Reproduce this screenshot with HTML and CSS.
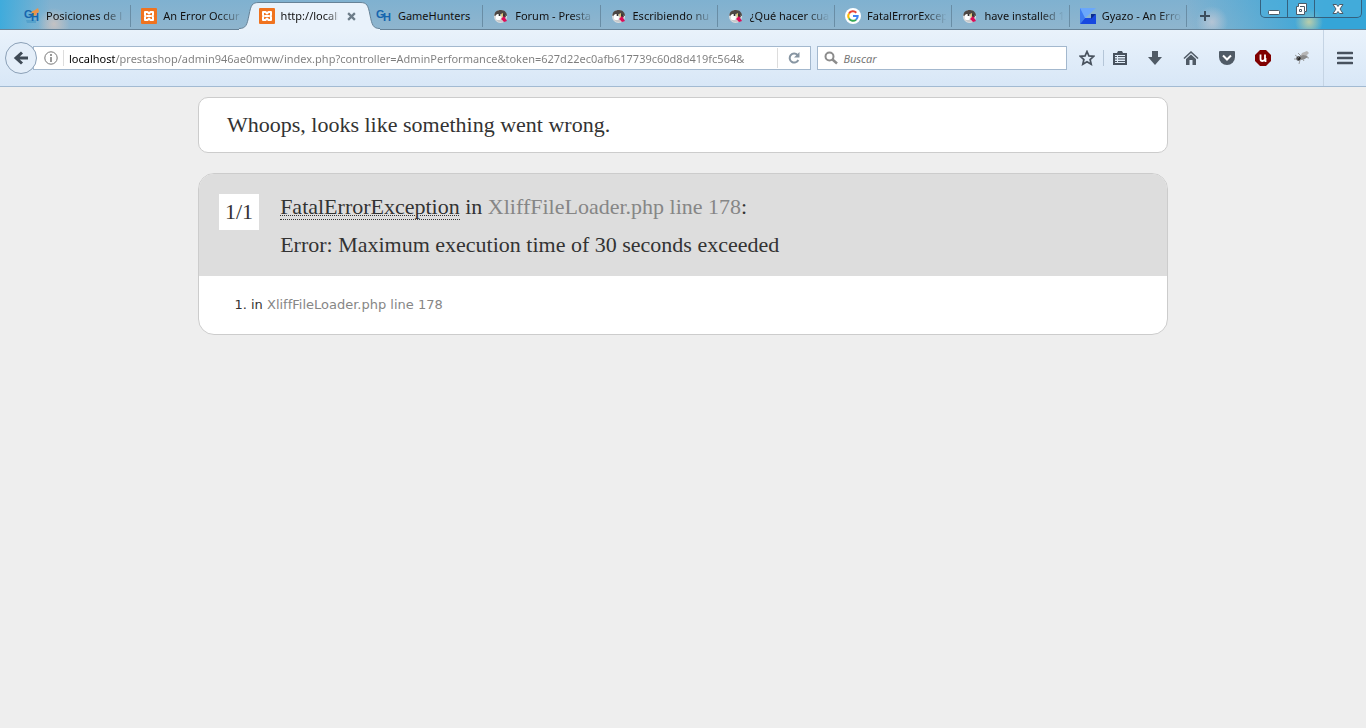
FILE: index.html
```html
<!DOCTYPE html>
<html lang="es">
<head>
    <meta charset="UTF-8">
    <title>Whoops, looks like something went wrong.</title>
    <link rel="stylesheet" href="styles.css">
</head>
<body>
    <!-- shared icons -->
    <svg class="defs" aria-hidden="true">
        <symbol id="xampp" viewBox="0 0 16 16">
            <rect width="16" height="16" rx="1" fill="#f0731f"/>
            <path d="M4 4h2.500L8 5.500 9.500 4H12v3l-1 1 1 1v3H9.500L8 10.500 6.500 12H4V9l1-1-1-1z" fill="#f0731f" stroke="#fff" stroke-width="2" stroke-linejoin="round"/>
            <path d="M6 8h4" stroke="#fff" stroke-width="2"/>
        </symbol>
        <symbol id="puffin" viewBox="0 0 16 16">
            <circle cx="7.500" cy="8.500" r="6.500" fill="#dededf"/>
            <path d="M1.500 8C1 4 4 2 8 2c4 0 6 3 6 6l-3-1-4-1-3 1z" fill="#4d4744"/>
            <path d="M3 7q2-2 4 0l1 3-2 3-3-2z" fill="#fff"/>
            <circle cx="6.500" cy="7" r="1" fill="#222"/>
            <path d="M8 6l2-1 1 4-2 1z" fill="#d8c57c"/>
            <path d="M10 5l3 3-1 2-2-1z" fill="#3b3634"/>
            <path d="M11 8l3 5-3 1-3-3z" fill="#dc0c58"/>
            <path d="M3 12q3 3 7 2l-1-2z" fill="#c8c9cb"/>
        </symbol>
        <symbol id="cap" viewBox="0 0 24 30">
            <path d="M0 30V28.500C7 28.500 8 25 10 15C12 5 13 2.500 20 2.500H24V30z" fill="#e9f2fb"/>
            <path d="M0 28.500C7 28.500 8 25 10 15C12 5 13 2.500 20 2.500H24" fill="none" stroke="#668297"/>
        </symbol>
    </svg>

    <header class="browser">
        <div class="tabstrip">
            <div class="tabs">
                <div class="tab">
                    <svg class="favicon" viewBox="0 0 16 16">
                        <path d="M7 4l4-2 3-2 1 3-2 4-4 1z" fill="#e8954b"/>
                        <path d="M2 12h10v3H3z" fill="#4c9bc8" opacity=".7"/>
                        <text x="0" y="10" class="gh-letter">G</text>
                        <text x="7" y="13" class="gh-letter">H</text>
                    </svg>
                    <span class="tab-title">Posiciones de l</span>
                </div>
                <div class="tab">
                    <svg class="favicon"><use href="#xampp"/></svg>
                    <span class="tab-title">An Error Occur</span>
                </div>
                <div class="tab active">
                    <svg class="tab-cap left"><use href="#cap"/></svg>
                    <span class="tab-middle"></span>
                    <svg class="tab-cap right"><use href="#cap"/></svg>
                    <svg class="favicon"><use href="#xampp"/></svg>
                    <span class="tab-title">http://locall</span>
                    <button class="tab-close" aria-label="Cerrar"><svg viewBox="0 0 8 8"><path d="M1 1l6 6M7 1L1 7" stroke="#6d7c89" stroke-width="2"/></svg></button>
                </div>
                <div class="tab">
                    <svg class="favicon" viewBox="0 0 16 16">
                        <text x="0" y="10" class="gh-letter">G</text>
                        <text x="7" y="13" class="gh-letter">H</text>
                    </svg>
                    <span class="tab-title whole">GameHunters</span>
                </div>
                <div class="tab">
                    <svg class="favicon"><use href="#puffin"/></svg>
                    <span class="tab-title">Forum - Presta</span>
                </div>
                <div class="tab">
                    <svg class="favicon"><use href="#puffin"/></svg>
                    <span class="tab-title">Escribiendo nu</span>
                </div>
                <div class="tab">
                    <svg class="favicon"><use href="#puffin"/></svg>
                    <span class="tab-title">¿Qué hacer cua</span>
                </div>
                <div class="tab">
                    <svg class="favicon" viewBox="0 0 16 16">
                        <circle cx="8" cy="8" r="8" fill="#fff"/>
                        <g fill="none" stroke-width="2">
                            <path d="M4 5.500A4.700 4.700 0 0 1 11.300 4.700" stroke="#ea4335"/>
                            <path d="M4 5.500a4.700 4.700 0 0 0 0 5" stroke="#fbbc05"/>
                            <path d="M4 10.500a4.700 4.700 0 0 0 7 1.200" stroke="#34a853"/>
                            <path d="M8 8h4.700a4.700 4.700 0 0 1-1.700 3.700" stroke="#4285f4"/>
                        </g>
                    </svg>
                    <span class="tab-title">FatalErrorExcep</span>
                </div>
                <div class="tab">
                    <svg class="favicon"><use href="#puffin"/></svg>
                    <span class="tab-title">have installed 1</span>
                </div>
                <div class="tab">
                    <svg class="favicon" viewBox="0 0 16 16">
                        <path d="M0 0h16L5 10 0 15z" fill="#6aa7fb"/>
                        <path d="M0 0l5 10-5 6z" fill="#3d7bf0"/>
                        <path d="M0 16l5-6h6l5-4v10z" fill="#1748e0"/>
                        <path d="M11 6h5l-5 5z" fill="#0c2c8c"/>
                    </svg>
                    <span class="tab-title">Gyazo - An Erro</span>
                </div>
            </div>
            <div class="strip-end">
                <button class="new-tab" aria-label="Nueva pestaña"><svg viewBox="0 0 12 12"><path d="M6 1v10M1 6h10" stroke="#3d4f5e" stroke-width="2"/></svg></button>
                <div class="window-buttons">
                    <button aria-label="Minimizar"><svg viewBox="0 0 14 14"><rect x="1.500" y="8.500" width="11" height="4" rx="1" fill="#fff" stroke="#4b5b68"/></svg></button>
                    <button aria-label="Restaurar"><svg viewBox="0 0 14 14"><path d="M4.500 1.500h8v8h-2v3h-8v-8h2z" fill="#fff" stroke="#4b5b68"/><path d="M5.500 7.500h2v2h-2zM6 4.500h4.500V9" fill="none" stroke="#4b5b68"/></svg></button>
                    <button aria-label="Cerrar ventana"><svg viewBox="0 0 14 14"><path d="M2 2.500h3.500L7 4.500l1.500-2H12L9 7l3 4.500H8.500L7 9.500l-1.500 2H2L5 7z" fill="#fff" stroke="#4b5b68"/></svg></button>
                </div>
            </div>
        </div>

        <div class="toolbar">
            <button class="back" aria-label="Atrás"><svg viewBox="0 0 16 16"><path d="M9 2.500L3 8l6 5.500M3 8h12" fill="none" stroke="#3f4a56" stroke-width="3"/></svg></button>
            <div class="url-bar">
                <button class="info" aria-label="Información del sitio"><svg viewBox="0 0 14 14"><circle cx="7" cy="7" r="6.200" fill="none" stroke="#777"/><path d="M7 6v5M7 3v2" stroke="#777" stroke-width="1.500"/></svg></button>
                <input class="url" type="text" aria-label="Dirección" value="localhost/prestashop/admin946ae0mww/index.php?controller=AdminPerformance&amp;token=627d22ec0afb617739c60d8d419fc564&amp;">
                <button class="reload" aria-label="Recargar"><svg viewBox="0 0 12 12"><path d="M9.500 3A4.500 4.500 0 1 0 10.300 8" fill="none" stroke="#8795a2" stroke-width="2"/><path d="M11.500 0v5.500H6z" fill="#8795a2"/></svg></button>
            </div>
            <div class="search-bar">
                <svg viewBox="0 0 14 14"><circle cx="5.500" cy="5.500" r="4" fill="none" stroke="#8c8c8c" stroke-width="2"/><path d="M8.500 8.500l4.500 4" stroke="#8c8c8c" stroke-width="2.500"/></svg>
                <input type="text" aria-label="Buscar" placeholder="Buscar">
            </div>
            <div class="tools">
                <button class="star" aria-label="Marcador"><svg viewBox="0 0 16 16"><path d="M8 1.500l1.900 4.400 4.800.4-3.600 3.200 1.100 4.700L8 11.700l-4.200 2.500 1.100-4.700L1.300 6.300l4.800-.4z" fill="none" stroke="#48525e" stroke-width="1.700"/></svg></button>
                <button aria-label="Lista de marcadores"><svg viewBox="0 0 16 16"><path d="M1 3h4l1-2h4l1 2h4v12H1z" fill="#48525e"/><path d="M3 5h10v8H3z" fill="#dfebf7"/><path d="M3 6.500h2M3 9h2M3 11.500h2M6 6.500h7M6 9h7M6 11.500h7" stroke="#48525e" stroke-width="1.200"/></svg></button>
                <button aria-label="Descargas"><svg viewBox="0 0 16 16"><path d="M5 1h6v6h4l-7 8-7-8h4z" fill="#505b66"/></svg></button>
                <button aria-label="Inicio"><svg viewBox="0 0 16 16"><path d="M1 8.500L8 2l7 6.500" fill="none" stroke="#505b66" stroke-width="1.600"/><path d="M3 9l5-4.500L13 9v6H9.500v-5h-3v5H3z" fill="#505b66"/></svg></button>
                <button aria-label="Pocket"><svg viewBox="0 0 16 16"><path d="M1 1h14q1 0 1 1v5a8 8 0 0 1-16 0V2q0-1 1-1z" fill="#505b66"/><path d="M4 5.500l4 4 4-4" fill="none" stroke="#fff" stroke-width="2"/></svg></button>
                <button aria-label="uBlock"><svg viewBox="0 0 16 16"><path d="M5 0h6l5 5v6l-5 5H5l-5-5V5z" fill="#800000"/><path d="M5.500 4.500v4.500q0 2 2 2t2.500-2V4.500M10.500 8v4" fill="none" stroke="#fff" stroke-width="1.800"/></svg></button>
                <button class="fly" aria-label="Firebug"><svg viewBox="0 0 16 16"><path d="M6 7l2-4 5-2 2 2-3 3-3 3z" fill="#b5b5b5"/><path d="M5 7l4-2 5 1-3 3-4 1z" fill="#8a8a8a"/><circle cx="4.500" cy="8.500" r="2.200" fill="#2b2b2b"/><path d="M1 5l4 3M0 9l4 0M5 14l1-4M10 11L8 8M15 8l-5-1M4 3l3 3" stroke="#888" stroke-width=".8"/></svg></button>
                <button class="menu" aria-label="Menú"><svg viewBox="0 0 16 16"><path d="M1 3h14M1 8h14M1 13h14" stroke="#48525e" stroke-width="2.600" stroke-linecap="round"/></svg></button>
            </div>
        </div>
    </header>

    <main id="content">
        <h1>Whoops, looks like something went wrong.</h1>
        <section class="exception">
            <h2 class="block-exception">
                <span class="counter">1/1</span>
                <span class="message">
                    <span><abbr title="Symfony\Component\Debug\Exception\FatalErrorException">FatalErrorException</abbr> in <a href="#">XliffFileLoader.php line 178</a>:</span>
                    <span>Error: Maximum execution time of 30 seconds exceeded</span>
                </span>
            </h2>
            <ol class="traces">
                <li>in <a href="#">XliffFileLoader.php line 178</a></li>
            </ol>
        </section>
    </main>
</body>
</html>
```
FILE: styles.css
```css
* {
    box-sizing: border-box;
}
body {
    margin: 0;
    background: #eee;
    color: #333;
    font-family: Verdana, "DejaVu Sans", sans-serif;
    font-size: 13px;
}
button {
    display: flex;
    align-items: center;
    justify-content: center;
    padding: 0;
    border: none;
    background: none;
    flex: none;
}
input {
    border: none;
    padding: 0;
    outline: none;
    background: none;
    min-width: 0;
    flex: 1;
    font: inherit;
}
.defs {
    position: absolute;
    width: 0;
    height: 0;
}
.browser {
    font-family: "Segoe UI", "Noto Sans", sans-serif;
    font-size: 11px;
}

/* tabs */
.tabstrip {
    display: flex;
    height: 30px;
    padding-left: 14px;
    border-bottom: 1px solid #668297;
    background:
        radial-gradient(circle at 54px 24px, rgba(220, 200, 190, .7), transparent 16px),
        radial-gradient(circle at 1212px 22px, rgba(205, 205, 215, .7), transparent 16px),
        radial-gradient(circle at 1309px 22px, rgba(215, 215, 160, .8), transparent 14px),
        linear-gradient(to right, #3fabdc, rgba(63, 171, 220, 0) 50px),
        linear-gradient(to left, #35a5d8 40px, rgba(53, 165, 216, 0) 180px),
        linear-gradient(#7fb1d0, #8fb5ce);
}
.tabs {
    display: grid;
    grid-template-columns: repeat(10, minmax(0, 1fr));
    flex: 1;
    min-width: 0;
}
.tab {
    position: relative;
    display: flex;
    align-items: center;
    gap: 6px;
    padding: 3px 6px 0 10px;
    color: #111;
}
.tab:not(.active)::after {
    content: "";
    position: absolute;
    right: 0;
    top: 5px;
    width: 1px;
    height: 22px;
    background: #698da5;
}
.tab:has(+ .active)::after {
    display: none;
}
.favicon {
    position: relative;
    flex: none;
    width: 16px;
    height: 16px;
}
.gh-letter {
    font: bold 11px "Liberation Sans", sans-serif;
    fill: #1565ae;
}
.tab-title {
    position: relative;
    flex: 1;
    overflow: hidden;
    white-space: nowrap;
    line-height: 20px;
    -webkit-mask-image: linear-gradient(to right, #000 56px, transparent 80px);
    mask-image: linear-gradient(to right, #000 56px, transparent 80px);
}
.tab-title.whole {
    -webkit-mask-image: none;
    mask-image: none;
}
.active .tab-title {
    -webkit-mask-image: linear-gradient(to right, #000 44px, transparent 64px);
    mask-image: linear-gradient(to right, #000 44px, transparent 64px);
}
.tab-close {
    position: relative;
    width: 16px;
    height: 16px;
}
.tab-close svg {
    width: 9px;
    height: 9px;
}
.tab-cap,
.tab-middle {
    position: absolute;
    top: 0;
    height: 30px;
}
.tab-cap {
    width: 24px;
}
.tab-cap.left {
    left: -10px;
}
.tab-cap.right {
    right: -14px;
    transform: scaleX(-1);
}
.tab-middle {
    left: 14px;
    right: 10px;
    top: 2px;
    height: 28px;
    border-top: 1px solid #668297;
    background: #e9f2fb;
}
.strip-end {
    display: flex;
    justify-content: space-between;
    align-items: flex-start;
    width: 179px;
    padding-right: 4px;
}
.new-tab {
    width: 36px;
    height: 32px;
}
.new-tab svg {
    width: 12px;
    height: 12px;
}
.window-buttons {
    display: flex;
    height: 18px;
    border: 1px solid #34617f;
    border-top: none;
    border-radius: 0 0 5px 5px;
    background: rgba(75, 175, 220, .6);
}
.window-buttons button {
    width: 27px;
    height: 17px;
    border-right: 1px solid #34617f;
}
.window-buttons button:last-child {
    width: 46px;
    border-right: none;
}
.window-buttons svg {
    width: 14px;
    height: 14px;
}

/* navigation toolbar */
.toolbar {
    display: flex;
    align-items: center;
    height: 57px;
    padding-left: 5px;
    border-bottom: 1px solid #a2bad2;
    background: linear-gradient(#e9f2fb, #d8e7f7);
}
.back {
    position: relative;
    width: 32px;
    height: 32px;
    border: 1px solid #8ba0b7;
    border-radius: 50%;
    background: #e4eef9;
}
.back svg {
    width: 16px;
    height: 16px;
}
.url-bar,
.search-bar {
    display: flex;
    align-items: center;
    height: 24px;
    border: 1px solid #a3b8ce;
    background: #fff;
    min-width: 0;
}
.url-bar {
    flex: 784;
    margin-left: -4px;
    margin-right: 6px;
}
.info {
    width: 30px;
    height: 16px;
    padding-left: 4px;
    border-right: 1px solid #ddd;
}
.info svg {
    width: 14px;
    height: 14px;
}
.url {
    height: 22px;
    margin-left: 5px;
    color: transparent;
    background: linear-gradient(to right, #000 46px, #7d7d7d 46px);
    -webkit-background-clip: text;
    background-clip: text;
}
.reload {
    width: 33px;
    height: 20px;
    border-left: 1px solid #ddd;
}
.reload svg {
    width: 12px;
    height: 12px;
}
.search-bar {
    flex: 244;
    gap: 5px;
    padding-left: 6px;
}
.search-bar svg {
    width: 14px;
    height: 14px;
}
.search-bar input::placeholder {
    color: #777;
    font-style: italic;
    opacity: 1;
}
.tools {
    display: flex;
    align-items: center;
    height: 56px;
    padding-left: 3px;
}
.tools button {
    width: 36px;
    height: 16px;
}
.tools svg {
    width: 16px;
    height: 16px;
}
.tools .star {
    width: 34px;
    border-right: 1px solid #b5c6d8;
}
.tools .star + button {
    width: 33px;
    padding-right: 2px;
}
.tools .fly {
    width: 42px;
}
.tools .menu {
    width: 43px;
    height: 56px;
    border-left: 1px solid #c5d4e4;
}

/* error page */
#content {
    max-width: 970px;
    margin: 10px auto 0;
}
h1,
h2 {
    margin: 0;
    font-family: Georgia, "Liberation Serif", serif;
    font-size: 22px;
    font-weight: normal;
}
h1 {
    margin-bottom: 20px;
    padding: 14px 28px;
    border: 1px solid #ccc;
    border-radius: 10px;
    background: #fff;
    line-height: 26px;
}
.exception {
    border: 1px solid #ccc;
    border-radius: 16px;
    background: #fff;
    overflow: hidden;
}
.block-exception {
    display: flex;
    align-items: flex-start;
    gap: 21px;
    padding: 20px 20px 12px;
    background: #ddd;
}
.counter {
    flex: none;
    padding: 0 6px;
    background: #fff;
    line-height: 36px;
}
.message {
    display: grid;
    line-height: 38px;
    margin-top: -6px;
}
abbr {
    text-decoration: underline dotted #333 1px;
    border-bottom: 1px dotted #333;
}
a {
    color: #868686;
    text-decoration: none;
}
.traces {
    margin: 0;
    padding: 20px 28px 20px 52px;
    line-height: 18px;
}
```
